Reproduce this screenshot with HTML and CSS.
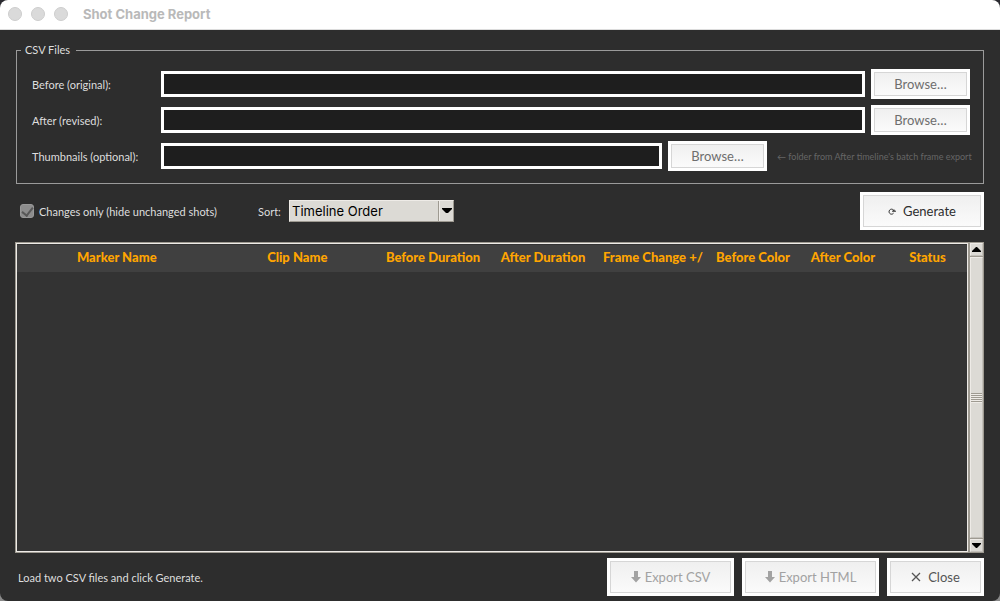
FILE: index.html
```html
<!DOCTYPE html>
<html lang="en">
<head>
<meta charset="utf-8">
<title>Shot Change Report</title>
<link rel="stylesheet" href="styles.css">
</head>
<body>
<div class="window">
  <header class="titlebar">
    <span class="light"></span><span class="light"></span><span class="light"></span>
    <h1 class="title">Shot Change Report</h1>
  </header>
  <main class="content">
    <fieldset class="files">
      <legend>CSV Files</legend>
      <div class="file-row">
        <label for="before">Before (original):</label>
        <input class="path" id="before" type="text">
        <button class="btn browse" type="button">Browse…</button>
      </div>
      <div class="file-row">
        <label for="after">After (revised):</label>
        <input class="path" id="after" type="text">
        <button class="btn browse" type="button">Browse…</button>
      </div>
      <div class="file-row">
        <label for="thumbs">Thumbnails (optional):</label>
        <input class="path" id="thumbs" type="text">
        <button class="btn browse" type="button">Browse…</button>
        <span class="hint">← folder from After timeline's batch frame export</span>
      </div>
    </fieldset>

    <div class="toolbar">
      <input class="check" id="changes" type="checkbox" checked>
      <label class="check-label" for="changes">Changes only (hide unchanged shots)</label>
      <label class="sort-label" for="sort">Sort:</label>
      <div class="combo">
        <select id="sort"><option>Timeline Order</option></select>
        <span class="combo-arrow"><svg width="10" height="6" viewBox="0 0 10 6"><path d="M0 0h10v1L6 5H4L0 1z"/></svg></span>
      </div>
      <button class="btn big generate" type="button">
        <svg width="8" height="8" viewBox="0 0 8 8" fill="none" stroke="currentColor"><path d="M5.600 6.100A2.500 2.500 0 1 1 6 4.200M4 4.200h4M6 2.500v1.700"/></svg>
        Generate
      </button>
    </div>

    <div class="results">
      <div class="tree">
        <table>
          <colgroup><col class="c-marker"><col class="c-clip"><col class="c-dur"><col class="c-dur"><col class="c-dur"><col class="c-color"><col class="c-color"><col class="c-status"></colgroup>
          <thead>
            <tr>
              <th><div>Marker Name</div></th>
              <th><div>Clip Name</div></th>
              <th><div>Before Duration</div></th>
              <th><div>After Duration</div></th>
              <th><div>Frame Change +/-</div></th>
              <th><div>Before Color</div></th>
              <th><div>After Color</div></th>
              <th><div>Status</div></th>
            </tr>
          </thead>
        </table>
      </div>
      <div class="scrollbar">
        <button class="step" type="button" aria-label="Scroll up"><svg width="9" height="5" viewBox="0 0 9 5"><path d="M4 0h1l4 4v1H0V4z"/></svg></button>
        <div class="thumb"><span class="grip"></span></div>
        <button class="step" type="button" aria-label="Scroll down"><svg width="9" height="5" viewBox="0 0 9 5"><path d="M0 0h9v1L5 5H4L0 1z"/></svg></button>
      </div>
    </div>

    <footer class="footer">
      <p class="status">Load two CSV files and click Generate.</p>
      <button class="btn big csv" type="button" disabled>
        <svg width="10" height="12" viewBox="0 0 10 12" fill="currentColor"><path d="M3 0h4v6h3L5 11.500 0 6h3z"/></svg>
        Export CSV
      </button>
      <button class="btn big html" type="button" disabled>
        <svg width="10" height="12" viewBox="0 0 10 12" fill="currentColor"><path d="M3 0h4v6h3L5 11.500 0 6h3z"/></svg>
        Export HTML
      </button>
      <button class="btn big close" type="button">
        <svg width="10" height="10" viewBox="0 0 10 10" fill="none" stroke="currentColor" stroke-width="1.300"><path d="M1 1l8 8M9 1L1 9"/></svg>
        Close
      </button>
    </footer>
  </main>
</div>
</body>
</html>
```
FILE: styles.css
```css
* { box-sizing: border-box; }

body {
  margin: 0;
  background: linear-gradient(#2a2a30 50%, #8a8a8a 50%);
  font-family: Lato, "Open Sans", sans-serif;
  font-size: 11px;
  color: #dedede;
}

.window {
  display: flex;
  flex-direction: column;
  min-height: 100vh;
  background: #2d2d2d;
  border-radius: 8px;
  overflow: hidden;
}

.titlebar {
  display: flex;
  align-items: center;
  gap: 9px;
  height: 30px;
  padding: 0 8px 2px;
  background: #fff;
  border-bottom: 1px solid #dcdcdc;
}

.light {
  width: 14px;
  height: 14px;
  border-radius: 50%;
  background: #dadada;
  border: 1px solid #cdcdcd;
}

.title {
  margin: 0 0 0 6px;
  font: bold 13px Inter, "Liberation Sans", sans-serif;
  color: #b9b9b9;
}

.content {
  flex: 1;
  display: flex;
  flex-direction: column;
  padding: 12px 16px 5px;
}

.files {
  display: flex;
  flex-direction: column;
  gap: 6px;
  margin: 0;
  min-width: 0;
  padding: 11px 13px 12px 15px;
  border: 1px solid #9a9a9a;
}

.files legend {
  margin-left: -11px;
  padding: 0 6px 0 4px;
  line-height: 16px;
}

.file-row {
  display: flex;
  align-items: center;
  gap: 6px;
  height: 30px;
}

.file-row label { width: 123px; }

.path {
  flex: 1;
  min-width: 0;
  height: 26px;
  padding: 0 4px;
  border: 3px solid #fff;
  background: #1e1e1e;
  color: #fff;
  font: inherit;
}

.btn {
  display: flex;
  align-items: center;
  justify-content: center;
  gap: 7px;
  padding: 0;
  border: 3px solid #fff;
  background: linear-gradient(#efefef, #fbfbfb);
  box-shadow: inset 0 0 0 1px #d6d6d6;
  color: #6e6e6e;
  font: 13px Lato, "Open Sans", sans-serif;
}

.browse { width: 99px; height: 30px; }
.big { height: 38px; }
.big:disabled { color: #a2a2a2; gap: 4px; }

.hint {
  margin-left: 4px;
  width: 193px;
  font-size: 9px;
  color: #666;
  white-space: nowrap;
}

.toolbar {
  display: flex;
  align-items: center;
  margin-top: 8px;
}

.check {
  appearance: none;
  display: grid;
  place-items: center;
  width: 14px;
  height: 14px;
  margin: 0 5px 0 4px;
  border-radius: 3px;
  background: #8d8d8d;
  border: 1px solid #999;
}

.check:checked::before {
  content: "";
  width: 5px;
  height: 9px;
  border: solid #585858;
  border-width: 0 2px 2px 0;
  transform: rotate(38deg);
  margin-bottom: 2px;
}

.check-label { width: 219px; }
.sort-label { width: 31px; }

.combo {
  display: flex;
  width: 165px;
  height: 22px;
  background: #dcdad5;
  border: 1px solid;
  border-color: #eeebe7 #9e9a91 #9e9a91 #eeebe7;
}

.combo select {
  flex: 1;
  appearance: none;
  border: 0;
  border-right: 1px solid #9e9a91;
  padding: 0 2px;
  background: transparent;
  color: #000;
  font: 13px Inter, "Liberation Sans", sans-serif;
}

.combo-arrow {
  display: grid;
  place-items: center;
  width: 14px;
  border-left: 1px solid #eeebe7;
}

.generate {
  width: 124px;
  margin-left: auto;
  color: #2e2e2e;
}

.results {
  flex: 1;
  display: flex;
  margin: 12px 0 5px -1px;
}

.tree {
  flex: 1;
  border: 1px solid #9e9a91;
  box-shadow: inset 0 0 0 1px #eeebe7;
  padding: 2px 1px 1px;
  background: #333;
}

.tree table {
  width: 100%;
  table-layout: fixed;
  border-collapse: collapse;
}

.c-marker { width: 21%; }
.c-clip { width: 17%; }
.c-dur { width: 11.58%; }
.c-color { width: 9.47%; }
.c-status { width: 8.32%; }

.tree th {
  height: 27px;
  padding: 0 5px 3px;
  background: #404040;
  color: #ffa500;
  font: 900 13px Lato, "Open Sans", sans-serif;
}

.tree th div { overflow: hidden; white-space: nowrap; }

.scrollbar {
  display: flex;
  flex-direction: column;
  width: 15px;
  padding: 1px;
  background: #9e9a91;
}

.step, .thumb {
  display: grid;
  place-items: center;
  padding: 0;
  background: #dcdad5;
  border: 1px solid;
  border-color: #eeebe7 #c3c0ba #c3c0ba #eeebe7;
}

.step { height: 13px; }
.thumb { flex: 1; margin: 1px 0; }

.grip {
  width: 11px;
  height: 10px;
  background: repeating-linear-gradient(#9e9a91 0 1px, #eeebe7 1px 2px);
}

.footer {
  display: flex;
  align-items: center;
  gap: 8px;
}

.status { flex: 1; margin: 0 0 0 2px; }
.csv { width: 127px; }
.html { width: 137px; }
.close { width: 97px; color: #555; }
```
